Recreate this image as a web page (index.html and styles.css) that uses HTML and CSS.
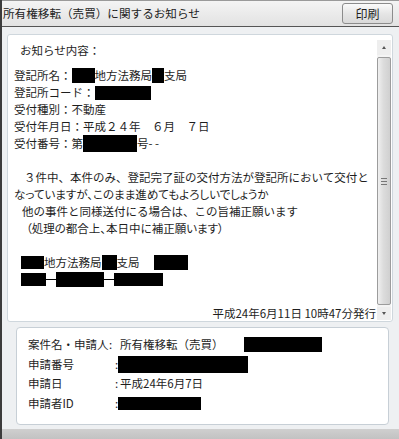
FILE: index.html
```html
<!DOCTYPE html>
<html lang="ja">
<head>
    <meta charset="UTF-8">
    <meta name="viewport" content="width=device-width, initial-scale=1.0">
    <title>所有権移転（売買）に関するお知らせ</title>
    <link rel="stylesheet" href="styles.css">
</head>
<body>
    <div class="window">
        <div class="titlebar">
            <div class="title">所有権移転（売買）に関するお知らせ</div>
            <div class="print-btn">印刷</div>
        </div>

        <div class="notice">
            <div class="notice-body">
                <p class="heading">お知らせ内容：</p>
                <p>登記所名：<span class="mask w23"></span>地方法務局<span class="mask w12"></span>支局</p>
                <p>登記所コード：<span class="mask w56 h14"></span></p>
                <p>受付種別：不動産</p>
                <p>受付年月日：平成２４年　６月　７日</p>
                <p>受付番号：第<span class="mask w54 h17"></span>号- -</p>
                <p class="blank"></p>
                <p class="indent1">３件中、本件のみ、登記完了証の交付方法が登記所において交付と</p>
                <p class="narrow">なっていますが、このまま進めてもよろしいでしょうか</p>
                <p class="indent2">他の事件と同様送付にる場合は、この旨補正願います</p>
                <p class="indent3 narrow">（処理の都合上、本日中に補正願います）</p>
                <p class="blank"></p>
                <p class="indent4"><span class="mask w23 h13"></span>地方法務局<span class="mask w15"></span>支局<span class="mask w34 gap"></span></p>
                <p class="indent4"><span class="mask w25 h13"></span><span class="dash"></span><span class="mask w48"></span><span class="dash"></span><span class="mask w49 h13"></span></p>
                <p class="blank"></p>
                <p class="issued">平成24年6月11日 10時47分発行</p>
            </div>
            <div class="scrollbar">
                <div class="sb-btn sb-up"><span class="arrow-up"></span></div>
                <div class="sb-thumb"><span class="grip"></span></div>
                <div class="sb-btn sb-down"><span class="arrow-down"></span></div>
            </div>
        </div>

        <div class="summary">
            <div class="row">
                <span class="label">案件名・申請人</span>
                <span class="sep first">:</span>
                <span class="value">所有権移転（売買）<span class="mask w78 gap2"></span></span>
            </div>
            <div class="row">
                <span class="label">申請番号</span>
                <span class="sep">:</span>
                <span class="value"><span class="mask w130 h17 pull"></span></span>
            </div>
            <div class="row">
                <span class="label">申請日</span>
                <span class="sep">:</span>
                <span class="value">平成24年6月7日</span>
            </div>
            <div class="row">
                <span class="label">申請者ID</span>
                <span class="sep">:</span>
                <span class="value"><span class="mask w83 h13 pull"></span></span>
            </div>
        </div>

        <div class="footer"></div>
    </div>
</body>
</html>
```

FILE: styles.css
```css
html
{
    margin: 0;
    padding: 0;
}
body
{
    margin: 0;
    font-family: "Noto Sans CJK JP", sans-serif;
    color: #1e1e1e;
}
p
{
    margin: 0;
}

.window
{
    width: 399px;
    height: 439px;
    box-sizing: border-box;
    border-left: 2px solid #3c3c3c;
    background-color: #eef0f2;
    display: flex;
    flex-direction: column;
    overflow: hidden;
}

/* title bar */
.titlebar
{
    height: 27px;
    box-sizing: border-box;
    border-top: 1px solid #9a9a9a;
    border-bottom: 1px solid #555;
    background-image: linear-gradient(#f4f4f4, #e2e2e2);
    display: flex;
    align-items: center;
    justify-content: space-between;
    padding: 0 6px 1px 1px;
}
.title
{
    font-size: 11.6px;
    color: #222;
}
.print-btn
{
    width: 51px;
    height: 21px;
    box-sizing: border-box;
    border: 1px solid #8c8c8c;
    border-radius: 3px;
    background-image: linear-gradient(#fbfbfb, #e6e6e6 50%, #d9d9d9);
    font-size: 12px;
    line-height: 19px;
    text-align: center;
    margin-top: 1px;
}

/* notice panel */
.notice
{
    height: 288px;
    box-sizing: border-box;
    margin: 7px 6px 0 5px;
    border: 1px solid #cfd7dd;
    border-radius: 3px;
    background-color: #fff;
    padding: 5px 1px 1px 6px;
    display: flex;
}
.notice-body
{
    flex: 1;
    overflow: hidden;
    padding-top: 2px;
    padding-right: 1px;
    font-size: 11.5px;
    line-height: 17px;
    white-space: nowrap;
}
.notice-body .heading
{
    padding-left: 6px;
    margin-bottom: 8px;
}
.notice-body .blank
{
    height: 17px;
}
.notice-body .narrow
{
    font-feature-settings: "palt";
}
.indent1 { padding-left: 10px; }
.indent2 { padding-left: 8px; }
.indent3 { padding-left: 12px; }
.indent4 { padding-left: 7px; }
.issued
{
    text-align: right;
}

.mask
{
    display: inline-block;
    width: 20px;
    height: 15px;
    background-color: #000;
    vertical-align: -3px;
}
.w12 { width: 12px; }
.w15 { width: 15px; }
.w23 { width: 23px; }
.w25 { width: 25px; }
.w34 { width: 34px; }
.w48 { width: 48px; }
.w49 { width: 49px; }
.w54 { width: 54px; }
.w56 { width: 56px; }
.w78 { width: 78px; }
.w83 { width: 83px; }
.w130 { width: 130px; }
.h13 { height: 13px; vertical-align: -2px; }
.h14 { height: 14px; }
.h17 { height: 17px; vertical-align: -4px; }
.gap { margin-left: 14px; }
.gap2 { margin-left: 20px; }
.pull { margin-left: -2px; }

.dash
{
    display: inline-block;
    width: 10px;
    height: 0;
    border-top: 1px solid #000;
    vertical-align: 4px;
}

/* scrollbar */
.scrollbar
{
    width: 14px;
    display: flex;
    flex-direction: column;
    background-color: #f4f4f4;
}
.sb-btn
{
    display: flex;
    align-items: center;
    justify-content: center;
    background-color: #eeeeee;
}
.sb-up { height: 15px; }
.sb-down { height: 13px; }
.arrow-up
{
    border-left: 2px solid transparent;
    border-right: 2px solid transparent;
    border-bottom: 3px solid #555;
}
.arrow-down
{
    border-left: 2px solid transparent;
    border-right: 2px solid transparent;
    border-top: 3px solid #555;
}
.sb-thumb
{
    flex: 1;
    margin: 2px 0 2px 0;
    box-sizing: border-box;
    border: 1px solid #9c9c9c;
    border-radius: 2px;
    background-image: linear-gradient(90deg, #f0f0f0, #dcdcdc 45%, #d0d0d0);
    display: flex;
    align-items: center;
    justify-content: center;
}
.grip
{
    width: 6px;
    height: 5px;
    border-top: 1px solid #777;
    border-bottom: 1px solid #777;
    background-image: linear-gradient(#777, #777);
    background-size: 100% 1px;
    background-position: center;
    background-repeat: no-repeat;
}

/* summary panel */
.summary
{
    height: 98px;
    box-sizing: border-box;
    margin: 5px 10px 0 14px;
    border: 1px solid #c7cfd6;
    border-radius: 4px;
    background-color: #fff;
    padding: 7px 0 0 11px;
    font-size: 11.5px;
    line-height: 19.7px;
}
.row
{
    display: flex;
    white-space: nowrap;
}
.label
{
    width: 80px;
    flex: none;
}
.sep
{
    width: 12px;
    flex: none;
    box-sizing: border-box;
    padding-left: 7px;
}
.sep.first
{
    padding-left: 1px;
}

.footer
{
    margin-top: auto;
    height: 10px;
    background-image: linear-gradient(#cfcfcf, #c2c2c2);
}
```
